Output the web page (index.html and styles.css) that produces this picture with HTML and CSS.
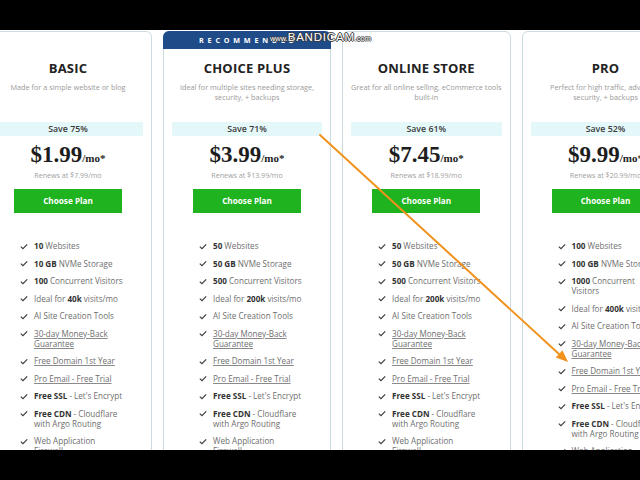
FILE: index.html
```html
<!DOCTYPE html>
<html lang="en">
<head>
<meta charset="utf-8">
<title>Plans</title>
<link rel="stylesheet" href="styles.css">
</head>
<body>
<div class="screen">
  <div class="bar"></div>
  <div class="stage">
    <div class="cards">
      <section class="card">
        <h2 class="title">BASIC</h2>
        <p class="desc">Made for a simple website or blog</p>
        <div class="save">Save 75%</div>
        <div class="price"><span class="amt">$1.99</span><span class="per">/mo*</span></div>
        <div class="renew">Renews at $7.99/mo</div>
        <a class="btn">Choose Plan</a>
        <ul class="feats">
          <li><svg class="ck" viewBox="0 0 10 8"><path d="M1 4.2L3.7 6.8L9 1.2"/></svg><span><b>10</b> Websites</span></li>
          <li><svg class="ck" viewBox="0 0 10 8"><path d="M1 4.2L3.7 6.8L9 1.2"/></svg><span><b>10 GB</b> NVMe Storage</span></li>
          <li><svg class="ck" viewBox="0 0 10 8"><path d="M1 4.2L3.7 6.8L9 1.2"/></svg><span><b>100</b> Concurrent Visitors</span></li>
          <li><svg class="ck" viewBox="0 0 10 8"><path d="M1 4.2L3.7 6.8L9 1.2"/></svg><span>Ideal for <b>40k</b> visits/mo</span></li>
          <li><svg class="ck" viewBox="0 0 10 8"><path d="M1 4.2L3.7 6.8L9 1.2"/></svg><span>AI Site Creation Tools</span></li>
          <li><svg class="ck" viewBox="0 0 10 8"><path d="M1 4.2L3.7 6.8L9 1.2"/></svg><span class="lnk">30-day Money-Back<br>Guarantee</span></li>
          <li><svg class="ck" viewBox="0 0 10 8"><path d="M1 4.2L3.7 6.8L9 1.2"/></svg><span class="lnk">Free Domain 1st Year</span></li>
          <li><svg class="ck" viewBox="0 0 10 8"><path d="M1 4.2L3.7 6.8L9 1.2"/></svg><span class="lnk">Pro Email - Free Trial</span></li>
          <li><svg class="ck" viewBox="0 0 10 8"><path d="M1 4.2L3.7 6.8L9 1.2"/></svg><span><b>Free SSL</b> - Let's Encrypt</span></li>
          <li><svg class="ck" viewBox="0 0 10 8"><path d="M1 4.2L3.7 6.8L9 1.2"/></svg><span><b>Free CDN</b> - Cloudflare<br>with Argo Routing</span></li>
          <li><svg class="ck" viewBox="0 0 10 8"><path d="M1 4.2L3.7 6.8L9 1.2"/></svg><span>Web Application<br>Firewall</span></li>
        </ul>
      </section>
      <section class="card featured">
        <div class="ribbon">RECOMMENDED</div>
        <h2 class="title">CHOICE PLUS</h2>
        <p class="desc">Ideal for multiple sites needing storage,<br>security, + backups</p>
        <div class="save">Save 71%</div>
        <div class="price"><span class="amt">$3.99</span><span class="per">/mo*</span></div>
        <div class="renew">Renews at $13.99/mo</div>
        <a class="btn">Choose Plan</a>
        <ul class="feats">
          <li><svg class="ck" viewBox="0 0 10 8"><path d="M1 4.2L3.7 6.8L9 1.2"/></svg><span><b>50</b> Websites</span></li>
          <li><svg class="ck" viewBox="0 0 10 8"><path d="M1 4.2L3.7 6.8L9 1.2"/></svg><span><b>50 GB</b> NVMe Storage</span></li>
          <li><svg class="ck" viewBox="0 0 10 8"><path d="M1 4.2L3.7 6.8L9 1.2"/></svg><span><b>500</b> Concurrent Visitors</span></li>
          <li><svg class="ck" viewBox="0 0 10 8"><path d="M1 4.2L3.7 6.8L9 1.2"/></svg><span>Ideal for <b>200k</b> visits/mo</span></li>
          <li><svg class="ck" viewBox="0 0 10 8"><path d="M1 4.2L3.7 6.8L9 1.2"/></svg><span>AI Site Creation Tools</span></li>
          <li><svg class="ck" viewBox="0 0 10 8"><path d="M1 4.2L3.7 6.8L9 1.2"/></svg><span class="lnk">30-day Money-Back<br>Guarantee</span></li>
          <li><svg class="ck" viewBox="0 0 10 8"><path d="M1 4.2L3.7 6.8L9 1.2"/></svg><span class="lnk">Free Domain 1st Year</span></li>
          <li><svg class="ck" viewBox="0 0 10 8"><path d="M1 4.2L3.7 6.8L9 1.2"/></svg><span class="lnk">Pro Email - Free Trial</span></li>
          <li><svg class="ck" viewBox="0 0 10 8"><path d="M1 4.2L3.7 6.8L9 1.2"/></svg><span><b>Free SSL</b> - Let's Encrypt</span></li>
          <li><svg class="ck" viewBox="0 0 10 8"><path d="M1 4.2L3.7 6.8L9 1.2"/></svg><span><b>Free CDN</b> - Cloudflare<br>with Argo Routing</span></li>
          <li><svg class="ck" viewBox="0 0 10 8"><path d="M1 4.2L3.7 6.8L9 1.2"/></svg><span>Web Application<br>Firewall</span></li>
        </ul>
      </section>
      <section class="card">
        <h2 class="title">ONLINE STORE</h2>
        <p class="desc">Great for all online selling, eCommerce tools<br>built-in</p>
        <div class="save">Save 61%</div>
        <div class="price"><span class="amt">$7.45</span><span class="per">/mo*</span></div>
        <div class="renew">Renews at $18.99/mo</div>
        <a class="btn">Choose Plan</a>
        <ul class="feats">
          <li><svg class="ck" viewBox="0 0 10 8"><path d="M1 4.2L3.7 6.8L9 1.2"/></svg><span><b>50</b> Websites</span></li>
          <li><svg class="ck" viewBox="0 0 10 8"><path d="M1 4.2L3.7 6.8L9 1.2"/></svg><span><b>50 GB</b> NVMe Storage</span></li>
          <li><svg class="ck" viewBox="0 0 10 8"><path d="M1 4.2L3.7 6.8L9 1.2"/></svg><span><b>500</b> Concurrent Visitors</span></li>
          <li><svg class="ck" viewBox="0 0 10 8"><path d="M1 4.2L3.7 6.8L9 1.2"/></svg><span>Ideal for <b>200k</b> visits/mo</span></li>
          <li><svg class="ck" viewBox="0 0 10 8"><path d="M1 4.2L3.7 6.8L9 1.2"/></svg><span>AI Site Creation Tools</span></li>
          <li><svg class="ck" viewBox="0 0 10 8"><path d="M1 4.2L3.7 6.8L9 1.2"/></svg><span class="lnk">30-day Money-Back<br>Guarantee</span></li>
          <li><svg class="ck" viewBox="0 0 10 8"><path d="M1 4.2L3.7 6.8L9 1.2"/></svg><span class="lnk">Free Domain 1st Year</span></li>
          <li><svg class="ck" viewBox="0 0 10 8"><path d="M1 4.2L3.7 6.8L9 1.2"/></svg><span class="lnk">Pro Email - Free Trial</span></li>
          <li><svg class="ck" viewBox="0 0 10 8"><path d="M1 4.2L3.7 6.8L9 1.2"/></svg><span><b>Free SSL</b> - Let's Encrypt</span></li>
          <li><svg class="ck" viewBox="0 0 10 8"><path d="M1 4.2L3.7 6.8L9 1.2"/></svg><span><b>Free CDN</b> - Cloudflare<br>with Argo Routing</span></li>
          <li><svg class="ck" viewBox="0 0 10 8"><path d="M1 4.2L3.7 6.8L9 1.2"/></svg><span>Web Application<br>Firewall</span></li>
        </ul>
      </section>
      <section class="card">
        <h2 class="title">PRO</h2>
        <p class="desc">Perfect for high traffic, advanced<br>security, + backups</p>
        <div class="save">Save 52%</div>
        <div class="price"><span class="amt">$9.99</span><span class="per">/mo*</span></div>
        <div class="renew">Renews at $20.99/mo</div>
        <a class="btn">Choose Plan</a>
        <ul class="feats">
          <li><svg class="ck" viewBox="0 0 10 8"><path d="M1 4.2L3.7 6.8L9 1.2"/></svg><span><b>100</b> Websites</span></li>
          <li><svg class="ck" viewBox="0 0 10 8"><path d="M1 4.2L3.7 6.8L9 1.2"/></svg><span><b>100 GB</b> NVMe Storage</span></li>
          <li><svg class="ck" viewBox="0 0 10 8"><path d="M1 4.2L3.7 6.8L9 1.2"/></svg><span><b>1000</b> Concurrent<br>Visitors</span></li>
          <li><svg class="ck" viewBox="0 0 10 8"><path d="M1 4.2L3.7 6.8L9 1.2"/></svg><span>Ideal for <b>400k</b> visits/mo</span></li>
          <li><svg class="ck" viewBox="0 0 10 8"><path d="M1 4.2L3.7 6.8L9 1.2"/></svg><span>AI Site Creation Tools</span></li>
          <li><svg class="ck" viewBox="0 0 10 8"><path d="M1 4.2L3.7 6.8L9 1.2"/></svg><span class="lnk">30-day Money-Back<br>Guarantee</span></li>
          <li><svg class="ck" viewBox="0 0 10 8"><path d="M1 4.2L3.7 6.8L9 1.2"/></svg><span class="lnk">Free Domain 1st Year</span></li>
          <li><svg class="ck" viewBox="0 0 10 8"><path d="M1 4.2L3.7 6.8L9 1.2"/></svg><span class="lnk">Pro Email - Free Trial</span></li>
          <li><svg class="ck" viewBox="0 0 10 8"><path d="M1 4.2L3.7 6.8L9 1.2"/></svg><span><b>Free SSL</b> - Let's Encrypt</span></li>
          <li><svg class="ck" viewBox="0 0 10 8"><path d="M1 4.2L3.7 6.8L9 1.2"/></svg><span><b>Free CDN</b> - Cloudflare<br>with Argo Routing</span></li>
          <li><svg class="ck" viewBox="0 0 10 8"><path d="M1 4.2L3.7 6.8L9 1.2"/></svg><span>Web Application<br>Firewall</span></li>
        </ul>
      </section>
    </div>
    <div class="watermark"><span class="wm-s">www.</span>BANDICAM<span class="wm-s">.com</span></div>
    <svg class="arrow" viewBox="0 0 640 420" width="640" height="420">
      <line x1="320" y1="105" x2="559" y2="324" stroke="#f0921c" stroke-width="2" stroke-linecap="round"/>
      <polygon points="568,332 555.8,327.6 562.5,320.2" fill="#f0921c"/>
    </svg>
  </div>
  <div class="bar"></div>
</div>
</body>
</html>
```

FILE: styles.css
```css
* { box-sizing: border-box; }
html, body { margin: 0; padding: 0; background: #000; }
body { width: 640px; height: 480px; overflow: hidden; font-family: "Open Sans", "Noto Sans", sans-serif; }
.screen { display: flex; flex-direction: column; width: 640px; height: 480px; }
.bar { height: 30px; background: #000; flex: 0 0 30px; }
.stage { position: relative; flex: 0 0 420px; height: 420px; overflow: hidden; background: #fff; }
.cards { display: flex; gap: 11px; margin-left: -16px; padding-top: 1px; }
.card {
  position: relative;
  flex: 0 0 168px;
  height: 440px;
  border: 1px solid #cadbe2;
  border-radius: 6px;
  background: #fff;
  display: flex;
  flex-direction: column;
  align-items: center;
  padding: 28px 8px 0;
}
.ribbon {
  position: absolute;
  top: -1px; left: -1px; right: -1px;
  height: 18px;
  background: #1f4c88;
  border-radius: 6px 6px 0 0;
  color: #fff;
  font-size: 7.2px;
  font-weight: 700;
  letter-spacing: 3.8px;
  line-height: 18px;
  text-align: center;
  padding-left: 3px;
}
.title { margin: 0; font-size: 13px; line-height: 16px; font-weight: 700; color: #222; letter-spacing: 0.2px; }
.desc { margin: 6px 0 0; min-height: 20px; font-size: 7.3px; line-height: 10px; color: #9a9a9a; text-align: center; white-space: nowrap; }
.save { margin-top: 20px; align-self: stretch; height: 14px; background: #e5f8f9; color: #3b3b3b; font-size: 8.8px; font-weight: 600; line-height: 14px; text-align: center; }
.price { margin-top: 6px; height: 26px; line-height: 26px; font-family: "Liberation Serif", "Times New Roman", serif; font-weight: 700; color: #1d1d1d; white-space: nowrap; }
.amt { font-size: 23px; }
.per { font-size: 11px; }
.renew { margin-top: 2px; font-size: 7.1px; line-height: 10px; color: #a0a0a0; }
.btn { margin-top: 9px; width: 108px; height: 24px; background: #1fb41f; color: #fff; font-size: 8.2px; font-weight: 700; line-height: 24px; text-align: center; }
.feats { list-style: none; margin: 28px 0 0; padding: 0 0 0 27px; align-self: stretch; display: flex; flex-direction: column; gap: 7.5px; }
.feats li { display: flex; align-items: flex-start; gap: 6px; font-size: 8.1px; line-height: 10px; color: #6e6e6e; white-space: nowrap; }
.feats b { color: #333; font-weight: 700; }
.ck { flex: 0 0 8px; width: 8px; height: 7px; margin-top: 1.5px; fill: none; stroke: #3a3a3a; stroke-width: 1.4; }
.lnk { text-decoration: underline; text-decoration-color: #8a8a8a; text-underline-offset: 1px; }
.watermark {
  position: absolute;
  left: 270px; top: 1px;
  font-family: "Liberation Sans", Arial, sans-serif;
  font-size: 11.5px;
  line-height: 12px;
  color: #fff;
  letter-spacing: 0.8px;
  text-shadow: 1px 0 0 #3a3a3a, -1px 0 0 #3a3a3a, 0 1px 0 #3a3a3a, 0 -1px 0 #3a3a3a;
}
.wm-s { font-size: 7.4px; letter-spacing: 0; }
.arrow { position: absolute; left: 0; top: 0; }
```
